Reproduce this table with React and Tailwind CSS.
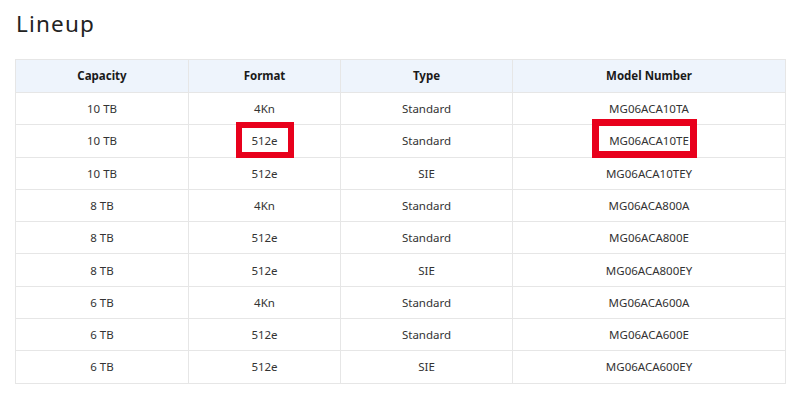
import React from "react";

const rows = [
  ["10 TB", "4Kn", "Standard", "MG06ACA10TA"],
  ["10 TB", "512e", "Standard", "MG06ACA10TE"],
  ["10 TB", "512e", "SIE", "MG06ACA10TEY"],
  ["8 TB", "4Kn", "Standard", "MG06ACA800A"],
  ["8 TB", "512e", "Standard", "MG06ACA800E"],
  ["8 TB", "512e", "SIE", "MG06ACA800EY"],
  ["6 TB", "4Kn", "Standard", "MG06ACA600A"],
  ["6 TB", "512e", "Standard", "MG06ACA600E"],
  ["6 TB", "512e", "SIE", "MG06ACA600EY"],
];

export default function App() {
  return (
    <div
      className="relative w-[800px] h-[396px] bg-white text-[#333]"
      style={{ fontFamily: '"Noto Sans", "Open Sans", sans-serif' }}
    >
      <h1 className="pl-[16px] pt-[8px] text-[22.5px] leading-[31px] font-normal text-[#222] tracking-[1.2px]">
        Lineup
      </h1>
      <div className="pl-[15px] pt-[20px]">
        <table className="border-collapse w-[770px] table-fixed text-[11.5px]">
          <colgroup>
            <col className="w-[173px]" />
            <col className="w-[152px]" />
            <col className="w-[172px]" />
            <col className="w-[273px]" />
          </colgroup>
          <thead>
            <tr className="h-[33px] bg-[#eef4fc]">
              {["Capacity", "Format", "Type", "Model Number"].map((h) => (
                <th
                  key={h}
                  className="border border-[#e6e6e6] font-bold text-[#1a1a1a] text-center p-0"
                >
                  {h}
                </th>
              ))}
            </tr>
          </thead>
          <tbody>
            {rows.map((r, i) => (
              <tr key={i} className="h-[32.3px]">
                {r.map((c, j) => (
                  <td
                    key={j}
                    className="border border-[#e6e6e6] text-center p-0 text-[#333]"
                  >
                    {c}
                  </td>
                ))}
              </tr>
            ))}
          </tbody>
        </table>
      </div>
      <div className="absolute left-[236px] top-[122px] w-[58px] h-[36px] border-[6px] border-[#e8001c]" />
      <div className="absolute left-[592px] top-[119px] w-[105px] h-[39px] border-[7px] border-[#e8001c]" />
    </div>
  );
}
